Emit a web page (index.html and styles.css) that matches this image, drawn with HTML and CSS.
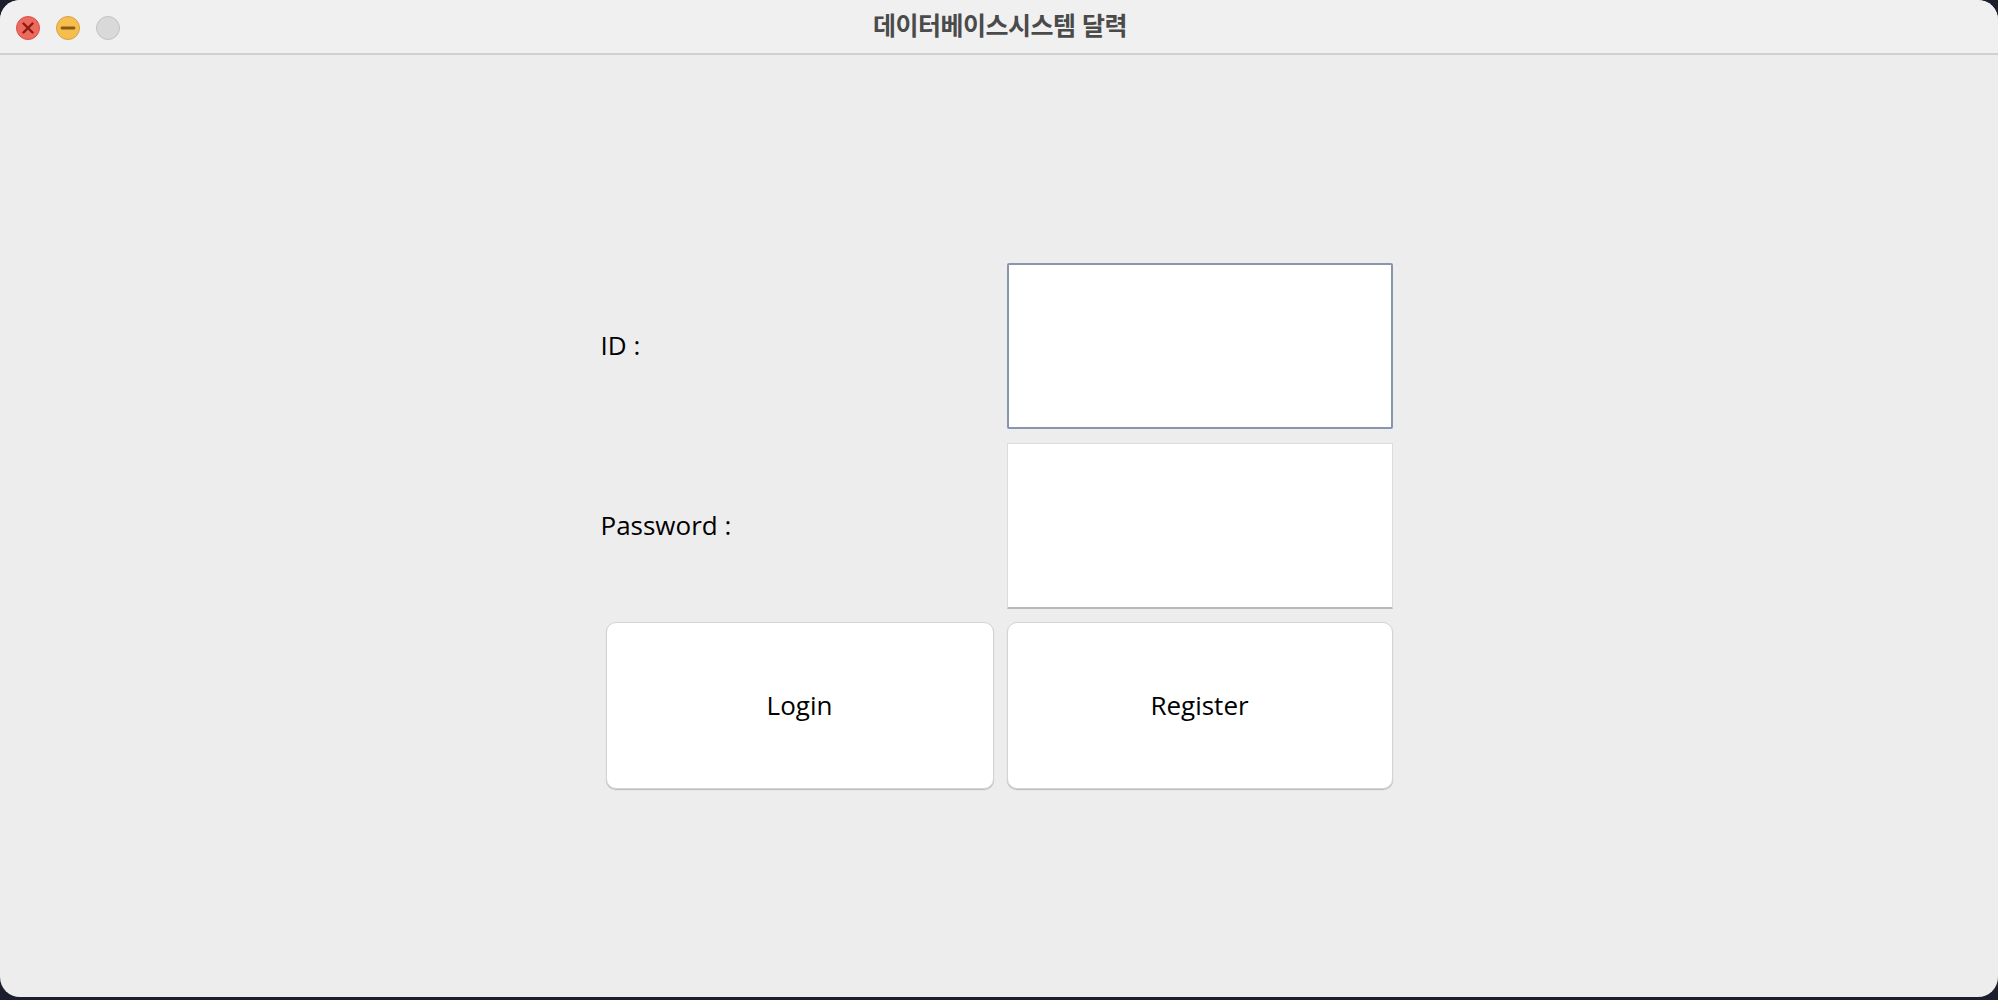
FILE: index.html
```html
<!DOCTYPE html>
<html lang="ko">
<head>
<meta charset="utf-8">
<title>데이터베이스시스템 달력</title>
<link rel="stylesheet" href="styles.css">
</head>
<body>
<div class="window">
  <div class="titlebar">
    <div class="lights">
      <span class="light close">
        <svg viewBox="0 0 24 24" width="24" height="24"><path d="M7.5 7.5 L16.5 16.5 M16.5 7.5 L7.5 16.5" stroke="#8a1c12" stroke-width="2.4" stroke-linecap="round"/></svg>
      </span>
      <span class="light min">
        <svg viewBox="0 0 24 24" width="24" height="24"><path d="M6 12 H18" stroke="#8e5a12" stroke-width="2.8" stroke-linecap="round"/></svg>
      </span>
      <span class="light max"></span>
    </div>
    <div class="title">데이터베이스시스템 달력</div>
  </div>
  <div class="content">
    <div class="form">
      <label class="label" for="id">ID :</label>
      <div class="cell"><input id="id" class="field focused" type="text"></div>
      <label class="label" for="pw">Password :</label>
      <div class="cell"><input id="pw" class="field" type="password"></div>
      <div class="cell btn-cell"><button class="btn">Login</button></div>
      <div class="cell btn-cell"><button class="btn">Register</button></div>
    </div>
  </div>
</div>
</body>
</html>
```
FILE: styles.css
```css
html, body {
  margin: 0;
  padding: 0;
  background: #1b1f2d;
  width: 1998px;
  height: 1000px;
  overflow: hidden;
}
.window {
  width: 1998px;
  height: 997px;
  background: #ededed;
  border-radius: 20px;
  overflow: hidden;
  display: flex;
  flex-direction: column;
}
.titlebar {
  height: 53px;
  flex: none;
  background: #f0f0f0;
  border-bottom: 2px solid #d0d0d0;
  display: flex;
  align-items: center;
  position: relative;
}
.lights {
  display: flex;
  gap: 16px;
  padding-left: 16px;
  padding-top: 2px;
}
.light {
  width: 24px;
  height: 24px;
  border-radius: 50%;
  box-sizing: border-box;
  display: block;
  position: relative;
}
.light svg {
  position: absolute;
  left: -1px;
  top: -1px;
}
.close { background: #ed6a5e; border: 1px solid #d2524a; }
.min { background: #f5be4f; border: 1px solid #d7a140; }
.max { background: #d9d9d9; border: 1px solid #c2c2c2; }
.title {
  position: absolute;
  left: 0;
  right: 0;
  top: 0;
  height: 48px;
  line-height: 48px;
  text-align: center;
  font-family: "Noto Sans CJK KR", "Noto Sans", sans-serif;
  font-weight: 700;
  font-size: 25px;
  letter-spacing: -0.5px;
  color: #4a4a4a;
  padding-left: 2px;
}
.content {
  flex: 1;
  display: flex;
  justify-content: center;
  padding-top: 201px;
}
.form {
  display: grid;
  grid-template-columns: 400px 400px;
  grid-template-rows: 180px 180px 180px;
  align-self: flex-start;
  margin-left: 1px;
}
.label {
  font-family: "Open Sans", "Noto Sans", sans-serif;
  font-size: 26px;
  color: #000;
  display: flex;
  align-items: center;
  padding-left: 1px;
  padding-bottom: 2px;
}
.cell {
  display: flex;
  padding: 7px;
}
.btn-cell {
  padding: 6px 6px 7px 6px;
}
.btn-cell + .btn-cell {
  padding: 6px 7px 7px 7px;
}
.field {
  flex: 1;
  margin: 0;
  box-sizing: border-box;
  background: #fff;
  border: 1px solid #dcdcdc;
  border-bottom: 2px solid #b8b8b8;
  border-radius: 1px;
  outline: none;
  font-family: "Open Sans", sans-serif;
  font-size: 26px;
}
.field.focused {
  border: 2px solid #8796ac;
  border-radius: 2px;
}
.btn {
  flex: 1;
  margin: 0;
  background: #fff;
  border: 1px solid #d4d4d4;
  border-radius: 10px;
  box-shadow: 0 1px 1px rgba(0, 0, 0, 0.22);
  font-family: "Open Sans", "Noto Sans", sans-serif;
  font-size: 26px;
  color: #000;
  padding: 0 0 2px 0;
}
```
